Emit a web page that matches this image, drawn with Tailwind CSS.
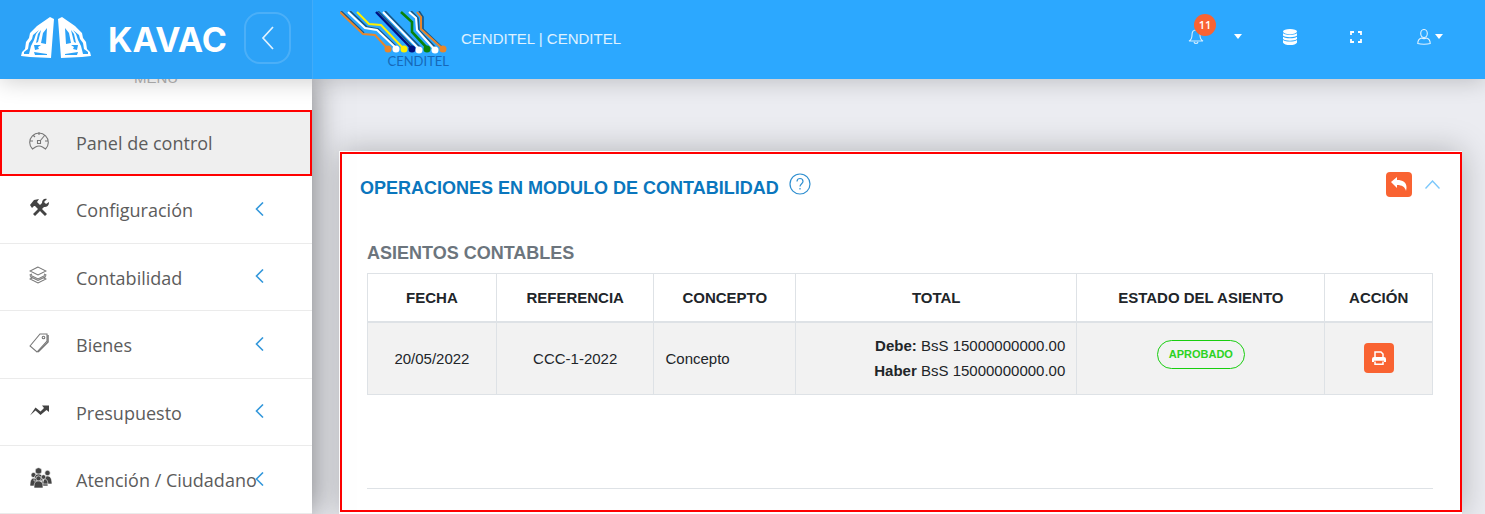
<!DOCTYPE html>
<html lang="es">
<head>
<meta charset="utf-8">
<meta name="viewport" content="width=device-width, initial-scale=1">
<title>KAVAC</title>
<script src="https://cdn.jsdelivr.net/npm/@tailwindcss/browser@4"></script>
</head>
<body class="min-h-screen flex flex-col overflow-x-hidden bg-[#ebecf1] font-['Liberation_Sans',Arial,sans-serif] text-[15px] text-[#212529]">
<header class="relative z-20 flex h-[79px] shrink-0 bg-[#2ca8ff] text-white shadow-[0_2px_22px_0_rgba(0,0,0,0.2)]">
  <div class="flex w-[313px] shrink-0 items-center border-r border-white/10 bg-[#2ca2f7] pb-1 pl-5">
    <a href="#" class="flex items-center gap-4">
      <svg class="h-[42px] w-[72px]" viewBox="0 0 72 42" fill="none" aria-hidden="true">
        <g id="half">
          <path d="M30 0 34 2 31 41 10 40 1 39 2 35 5 32 6 25 9 21 10 16 17 9Z" fill="#fff"/>
          <path d="M19 13 13 18 12 22 9 26 8 32 4 35 4 37 9 37 11 29 14 23 16 17ZM27 11 23 16 21 26 26 27ZM21 13 18 17 16 26 18 25ZM14 28 21 28 18 30 19 32 15 33ZM14 35 27 37 27 38 15 38Z" fill="#2ca2f7"/>
        </g>
        <use href="#half" transform="translate(72 0) scale(-1 1)"/>
      </svg>
      <span class="pt-1 font-['Inter'] text-[34px] leading-[40px] font-bold">KAVAC</span>
    </a>
    <button type="button" aria-label="Contraer menú" class="ml-auto mr-[21px] flex h-[52px] w-[47px] items-center justify-center rounded-2xl border-2 border-white/15">
      <svg class="h-6 w-4" viewBox="0 0 16 24" fill="none" stroke="#fff" stroke-opacity=".85" stroke-width="1.7"><path d="M13 1 3 12l10 11"/></svg>
    </button>
  </div>
  <div class="flex min-w-0 flex-1 items-center">
    <div class="ml-[27px] flex w-[109px] flex-col items-end">
      <svg class="h-[43px] w-[109px]" viewBox="0 0 109 43" fill="none" stroke-width="2" aria-hidden="true">
        <g stroke="#12283c" stroke-opacity=".65" stroke-width="1.600"><path d="M10 0 27 16 38 18 57 36M45 0 81 37M71 0 78 7 79 19 96 37M79 0 83 6 83 18 103 37M38 0 73 36M1 0 24 22"/></g>
        <path stroke="#e8862b" d="M0 1 23 23 35 24 48 38M77 1 81 6 81 18 103 38"/>
        <path stroke="#fff" d="M8 1 25 17 37 19 56 37M43 1 79 38M69 1 76 7 77 19 95 39"/>
        <path stroke="#ffef00" d="M17 1 29 13 41 14 64 38"/>
        <path stroke="#00107f" stroke-width="2.400" d="M36 1 72 38"/>
        <path stroke="#07830b" stroke-width="2.600" d="M61 1 72 11 72 21 87 37"/>
        <circle cx="48" cy="38" r="3.500" fill="#e8862b"/><circle cx="56" cy="38" r="3.500" fill="#fff"/><circle cx="64" cy="38" r="3.500" fill="#ffef00"/><circle cx="72" cy="38" r="3.500" fill="#00107f"/><circle cx="79" cy="39" r="3.500" fill="#fff"/><circle cx="87" cy="38" r="3.500" fill="#07830b"/><circle cx="95" cy="39" r="3.500" fill="#fff"/><circle cx="103" cy="38" r="3.500" fill="#e8862b"/>
      </svg>
      <span class="font-['Lato'] text-[13px] leading-[14px] text-[#1668b8]">CENDITEL</span>
    </div>
    <span class="ml-[12px] text-white/85">CENDITEL | CENDITEL</span>
    <nav class="mr-[42px] mb-[6px] ml-auto flex items-center" aria-label="Acciones">
      <button type="button" aria-label="Notificaciones" class="relative flex w-[54px] items-center justify-between">
        <svg class="h-4 w-4" viewBox="0 0 16 16" fill="none" stroke="#fff" stroke-opacity=".8" stroke-width="1.100"><path d="M8 1C5 1 4 3 4 6c0 3-1 5-3 6h14c-2-1-3-3-3-6 0-3-1-5-4-5ZM6 13c.5 2 3.500 2 4 0"/></svg>
        <span class="absolute -top-[15px] left-[6px] h-[22px] w-[22px] rounded-full bg-[#f96332] text-center font-['Open_Sans'] text-[11px] leading-[22px] font-semibold">11</span>
        <svg class="h-[5px] w-2" viewBox="0 0 8 5" fill="#fff"><path d="M0 0h8L4 5Z"/></svg>
      </button>
      <button type="button" aria-label="Base de datos" class="ml-[41px]">
        <svg class="h-4 w-[14px]" viewBox="0 0 14 16" fill="#fff"><ellipse cx="7" cy="2.600" rx="7" ry="2.600"/><path d="M0 4.300c3 2 11 2 14 0v2.200c-2 2.300-12 2.300-14 0ZM0 7.700c3 2 11 2 14 0v2.200c-2 2.300-12 2.300-14 0ZM0 11.100c3 2 11 2 14 0v2.300c-1 3.400-13 3.400-14 0Z"/></svg>
      </button>
      <button type="button" aria-label="Pantalla completa" class="ml-[53px]">
        <svg class="h-3 w-3" viewBox="0 0 12 12" fill="none" stroke="#fff" stroke-width="1.800"><path d="M1 4V1h3M8 1h3v3M11 8v3H8M4 11H1V8"/></svg>
      </button>
      <button type="button" aria-label="Usuario" class="ml-[55px] flex items-center gap-1">
        <svg class="h-4 w-[14px]" viewBox="0 0 14 16" fill="none" stroke="#fff" stroke-opacity=".85" stroke-width="1.100"><ellipse cx="7" cy="4.500" rx="3.300" ry="4"/><path d="M4.500 9C1 10 .8 12 .8 14.500c3 1 9.400 1 12.400 0C13.200 12 13 10 9.500 9c-1.500.8-3.500.8-5 0Z"/></svg>
        <svg class="h-[5px] w-2" viewBox="0 0 8 5" fill="#fff"><path d="M0 0h8L4 5Z"/></svg>
      </button>
    </nav>
  </div>
</header>

<div class="flex flex-1">
  <aside class="relative z-10 w-[312px] shrink-0 bg-white shadow-[0_0_30px_0_rgba(0,0,0,0.5)]">
    <p class="-mt-[11px] mb-[22px] text-center leading-5 text-[#b5b5b5]">MENÚ</p>
    <ul class="font-['Open_Sans'] text-[18px] text-[#5c5c5c]">
      <li class="h-[66px] border-2 border-[#f00] bg-[#efefef]">
        <a href="#" class="flex h-full items-center pl-[27px]">
          <svg class="mb-1 h-5 w-5" viewBox="0 0 20 20" fill="none" stroke="#777" stroke-width="1.100"><path d="M3.500 18A9.300 9.300 0 1 1 16.500 18l-3-2c-2.500-1.500-4.500-1.500-7 0ZM10 1v3M1 10h3M16 10h3M4 4l2 2M8.500 9.500h3v3h-3ZM11 10l5-6"/></svg>
          <span class="ml-[27px]">Panel de control</span>
        </a>
      </li>
      <li class="h-[68px] border-b border-[#ebebeb]">
        <a href="#" class="flex h-full items-center pl-[29px] pr-[48px]">
          <svg class="mb-1 h-5 w-5 shrink-0" viewBox="0 0 20 20" fill="#444"><path d="M1 7 5 2l5-1-2 3 2 2 1 1 2-2c0-3 2-5 5-4l-3 3 2 2 3-2c0 4-2 5-5 5l-2 2 5 5-2 2-5-5-5 5-2-2 5-5-3-3-1 0-2 2Z"/></svg>
          <span class="ml-[27px] min-w-0 pt-[2px] whitespace-nowrap">Configuración</span>
          <svg class="mb-[2px] ml-auto h-[14px] w-[9px] shrink-0" viewBox="0 0 9 14" fill="none" stroke="#3498db" stroke-width="1.600"><path d="M8 .5 1.500 7 8 13.500"/></svg>
        </a>
      </li>
      <li class="h-[67px] border-b border-[#ebebeb]">
        <a href="#" class="flex h-full items-center pl-[29px] pr-[48px]">
          <svg class="mb-1 h-5 w-[18px] shrink-0" viewBox="0 0 18 20" fill="none" stroke="#777" stroke-width="1.100"><path d="M9 2 1 6l8 4 8-4ZM3 9l-2 1 8 4 8-4-2-1M3 13l-2 1 8 4 8-4-2-1M1 11.500l8 4 8-4"/></svg>
          <span class="ml-[29px] min-w-0 pt-[2px] whitespace-nowrap">Contabilidad</span>
          <svg class="mb-[2px] ml-auto h-[14px] w-[9px] shrink-0" viewBox="0 0 9 14" fill="none" stroke="#3498db" stroke-width="1.600"><path d="M8 .5 1.500 7 8 13.500"/></svg>
        </a>
      </li>
      <li class="h-[68px] border-b border-[#ebebeb]">
        <a href="#" class="flex h-full items-center pl-[29px] pr-[48px]">
          <svg class="mb-1 h-5 w-5 shrink-0" viewBox="0 0 20 20" fill="none" stroke="#777" stroke-width="1.100"><path d="M1 13 11 1l7 0v7L8 19Z"/><path d="M19 2v7L9 19" stroke-width="1.500"/><circle cx="14.500" cy="4.500" r="1.300"/></svg>
          <span class="ml-[27px] min-w-0 pt-[2px] whitespace-nowrap">Bienes</span>
          <svg class="mb-[2px] ml-auto h-[14px] w-[9px] shrink-0" viewBox="0 0 9 14" fill="none" stroke="#3498db" stroke-width="1.600"><path d="M8 .5 1.500 7 8 13.500"/></svg>
        </a>
      </li>
      <li class="h-[67px] border-b border-[#ebebeb]">
        <a href="#" class="flex h-full items-center pl-[29px] pr-[48px]">
          <svg class="mb-1 h-5 w-5 shrink-0" viewBox="0 0 20 20" fill="#444"><path d="M1 15.500 6.500 7.500l5 4L15 8l-2-2.500h7v6.500l-2.500-2-6 5-5-4.500Z"/></svg>
          <span class="ml-[27px] min-w-0 pt-[2px] whitespace-nowrap">Presupuesto</span>
          <svg class="mb-[2px] ml-auto h-[14px] w-[9px] shrink-0" viewBox="0 0 9 14" fill="none" stroke="#3498db" stroke-width="1.600"><path d="M8 .5 1.500 7 8 13.500"/></svg>
        </a>
      </li>
      <li class="h-[68px] border-b border-[#ebebeb]">
        <a href="#" class="flex h-full items-center pl-[29px] pr-[48px]">
          <svg class="mb-1 h-[22px] w-[24px] shrink-0" viewBox="0 0 24 22" fill="#444" stroke="#fff" stroke-width=".6"><circle cx="9.500" cy="4" r="3.300"/><circle cx="18.500" cy="6" r="2.700"/><circle cx="4.500" cy="8" r="2.500"/><path d="M14 17c0-5 1-8 4.500-8S23 13 23 17ZM5 14c0-4 1-7 4.500-7s5 3 5 7ZM1 19c0-5 1-8 4-8s4 3 4 8ZM12 19c0-5 1-7 3.500-7s3.500 2 3.500 7Z"/><circle cx="14.500" cy="10" r="2.300"/><circle cx="9.500" cy="11.500" r="2.600"/><path d="M5 21c0-5 1-7 4.500-7s4.500 2 4.500 7Z"/></svg>
          <span class="ml-[23px] min-w-0 pt-[2px] whitespace-nowrap">Atención / Ciudadano</span>
          <svg class="mb-[2px] ml-auto h-[14px] w-[9px] shrink-0" viewBox="0 0 9 14" fill="none" stroke="#3498db" stroke-width="1.600"><path d="M8 .5 1.500 7 8 13.500"/></svg>
        </a>
      </li>
    </ul>
  </aside>

  <main class="min-w-0 flex-1 pt-[72px] pr-[23px] pl-[27px]">
    <section class="h-full bg-white pt-px shadow-[0_0_30px_0_rgba(0,0,0,0.25)]">
      <div class="ml-px border-2 border-[#f00] pb-[21px]">
        <div class="flex h-[60px] items-center pr-[20px] pl-[18px]">
          <h1 class="mt-[8px] text-[18px] font-bold text-[#0a76bd]">OPERACIONES EN MODULO DE CONTABILIDAD</h1>
          <button type="button" aria-label="Ayuda" class="ml-[10px]">
            <svg class="h-[22px] w-[22px]" viewBox="0 0 22 22" fill="none" stroke="#2f8fd0" stroke-width="1.200"><circle cx="11" cy="11" r="10"/><path d="M8 8.500C8 4.500 14 4.500 14 8.500c0 2-3 2.500-3 5M11 15v1.500"/></svg>
          </button>
          <button type="button" aria-label="Regresar" class="ml-auto flex h-[25px] w-[26px] items-center justify-center rounded bg-[#f96332]">
            <svg class="h-[15px] w-4" viewBox="0 0 16 15" fill="#fff"><path d="M0 5 6 0v3c7 0 11 3 9 11-1-4-4-6-9-6v3Z"/></svg>
          </button>
          <button type="button" aria-label="Contraer" class="ml-[13px]">
            <svg class="h-[9px] w-[15px]" viewBox="0 0 15 9" fill="none" stroke="#7cc8fb" stroke-width="1.400"><path d="M.5 8.500 7.500 1l7 7.500"/></svg>
          </button>
        </div>
        <div class="pt-[27px] pr-[27px] pl-[25px]">
          <h2 class="mb-2 text-[18px] leading-6 font-bold text-[#6c757d]">ASIENTOS CONTABLES</h2>
          <table class="w-full table-fixed border-collapse border border-[#dee2e6]">
            <colgroup><col class="w-[12.1%]"><col class="w-[14.8%]"><col class="w-[13.3%]"><col class="w-[26.4%]"><col class="w-[23.3%]"><col class="w-[10.1%]"></colgroup>
            <thead>
              <tr class="h-[48px] border-b-2 border-[#dee2e6]">
                <th scope="col" class="border-x border-[#dee2e6] pt-[2px]">FECHA</th>
                <th scope="col" class="border-x border-[#dee2e6] pt-[2px]">REFERENCIA</th>
                <th scope="col" class="border-x border-[#dee2e6] pt-[2px]">CONCEPTO</th>
                <th scope="col" class="border-x border-[#dee2e6] pt-[2px]">TOTAL</th>
                <th scope="col" class="border-x border-[#dee2e6] pt-[2px]">ESTADO DEL ASIENTO</th>
                <th scope="col" class="border-x border-[#dee2e6] pt-[2px]">ACCIÓN</th>
              </tr>
            </thead>
            <tbody>
              <tr class="h-[73px] bg-[#f2f2f2]">
                <td class="border-x border-[#dee2e6] pt-[2px] text-center">20/05/2022</td>
                <td class="border-x border-[#dee2e6] pt-[2px] text-center">CCC-1-2022</td>
                <td class="border-x border-[#dee2e6] px-[11px] pt-[2px]">Concepto</td>
                <td class="border-x border-[#dee2e6] px-[11px] text-right leading-[25px]"><b>Debe:</b> BsS 15000000000.00<br><b>Haber</b> BsS 15000000000.00</td>
                <td class="border-x border-[#dee2e6] pb-2 text-center"><span class="inline-block rounded-full border border-[#18ce0f] px-[11px] text-[11px] leading-[27px] font-bold text-[#2bd322]">APROBADO</span></td>
                <td class="border-x border-[#dee2e6]">
                  <button type="button" aria-label="Imprimir" class="mx-auto flex h-[30px] w-[30px] items-center justify-center rounded bg-[#f96332]">
                    <svg class="h-[14px] w-[14px]" viewBox="0 0 14 14" fill="none" stroke="#fff" stroke-width="1.500"><path d="M3 7V1h6l2 2v4M3 10.500v2.700h8v-2.700"/><path d="M0 11V8q0-2 2-2h10q2 0 2 2v3h-2V9.800H2V11Z" fill="#fff" stroke="none"/></svg>
                  </button>
                </td>
              </tr>
            </tbody>
          </table>
          <hr class="mt-[93px] border-[#dee2e6]">
        </div>
      </div>
    </section>
  </main>
</div>
</body>
</html>
